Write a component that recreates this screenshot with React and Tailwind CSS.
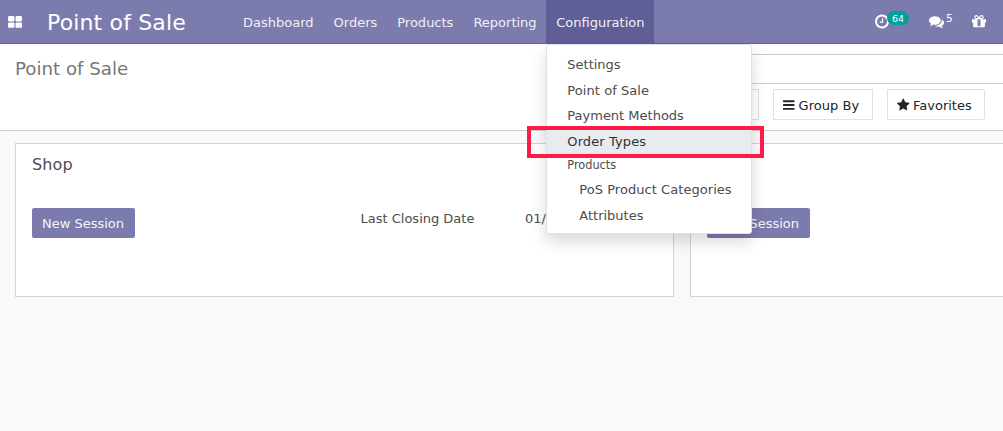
const ICONS = {
  apps: {
    w: 1664,
    d: 'M768 1024v384q0 52-38 90t-90 38h-512q-52 0-90-38t-38-90v-384q0-52 38-90t90-38h512q52 0 90 38t38 90zm0-768v384q0 52-38 90t-90 38h-512q-52 0-90-38t-38-90v-384q0-52 38-90t90-38h512q52 0 90 38t38 90zm896 768v384q0 52-38 90t-90 38h-512q-52 0-90-38t-38-90v-384q0-52 38-90t90-38h512q52 0 90 38t38 90zm0-768v384q0 52-38 90t-90 38h-512q-52 0-90-38t-38-90v-384q0-52 38-90t90-38h512q52 0 90 38t38 90z',
  },
  clock: {
    w: 1536,
    d: 'M896 544v448q0 14-9 23t-23 9h-320q-14 0-23-9t-9-23v-64q0-14 9-23t23-9h224v-352q0-14 9-23t23-9h64q14 0 23 9t9 23zm416 352q0-148-73-273t-198-198-273-73-273 73-198 198-73 273 73 273 198 198 273 73 273-73 198-198 73-273zm224 0q0 209-103 385.5t-279.5 279.5-385.5 103-385.5-103-279.5-279.5-103-385.5 103-385.5 279.5-279.5 385.5-103 385.5 103 279.5 279.5 103 385.5z',
  },
  comments: {
    w: 1792,
    d: 'M1408 768q0 139-94 257t-256.5 186.5-353.5 68.5q-86 0-176-16-124 88-278 128-36 9-86 16h-3q-11 0-20.5-8t-11.5-21q-1-3-1-6.5t.5-6.5 2-6l2.5-5 3.5-5.5 4-5 4.5-5 4-4.5q5-6 23-25t26-29.5 22.5-29 25-38.5 20.5-44q-124-72-195-177t-71-224q0-139 94-257t256.5-186.5 353.5-68.5 353.5 68.5 256.5 186.5 94 257zm384 256q0 120-71 224.5t-195 176.5q10 24 20.5 44t25 38.5 22.5 29 26 29.5 23 25q1 1 4 4.5t4.5 5 4 5 3.5 5.5l2.5 5 2 6 .5 6.5-1 6.5q-3 14-13 22t-22 7q-50-7-86-16-154-40-278-128-90 16-176 16-271 0-472-132 58 4 88 4 161 0 309-45t264-129q125-92 192-212t67-254q0-77-23-152 129 71 204 178t75 230z',
  },
  gift: {
    w: 1536,
    d: 'M928 1356v-716h-320v716q0 25 18 38.5t46 13.5h192q28 0 46-13.5t18-38.5zm-456-844h195l-126-161q-26-31-69-31-40 0-68 28t-28 68 28 68 68 28zm688-96q0-40-28-68t-68-28q-43 0-69 31l-125 161h194q40 0 68-28t28-68zm376 256v320q0 14-9 23t-23 9h-96v416q0 40-28 68t-68 28h-1088q-40 0-68-28t-28-68v-416h-96q-14 0-23-9t-9-23v-320q0-14 9-23t23-9h440q-93 0-158.5-65.5t-65.5-158.5 65.5-158.5 158.5-65.5q107 0 168 77l128 165 128-165q61-77 168-77 93 0 158.5 65.5t65.5 158.5-65.5 158.5-158.5 65.5h440q14 0 23 9t9 23z',
  },
  bars: {
    w: 1536,
    d: 'M1536 1344v128q0 26-19 45t-45 19h-1408q-26 0-45-19t-19-45v-128q0-26 19-45t45-19h1408q26 0 45 19t19 45zm0-512v128q0 26-19 45t-45 19h-1408q-26 0-45-19t-19-45v-128q0-26 19-45t45-19h1408q26 0 45 19t19 45zm0-512v128q0 26-19 45t-45 19h-1408q-26 0-45-19t-19-45v-128q0-26 19-45t45-19h1408q26 0 45 19t19 45z',
  },
  star: {
    w: 1664,
    d: 'M1664 647q0 22-26 48l-363 354 86 500q1 7 1 20 0 21-10.5 35.5t-30.5 14.5q-19 0-40-12l-449-236-449 236q-22 12-40 12-21 0-31.5-14.5t-10.5-35.5q0-6 2-20l86-500-364-354q-25-27-25-48 0-37 56-46l502-73 225-455q19-41 49-41t49 41l225 455 502 73q56 9 56 46z',
  },
};

function Icon({ name, className }) {
  const { w, d } = ICONS[name];
  return (
    <svg viewBox={`0 0 ${w} 1792`} fill="currentColor" className={className}>
      <path d={d} />
    </svg>
  );
}

function DropdownItem({ children, nested, active }) {
  return (
    <div
      className={`h-[25.5px] py-[3px] leading-[19.5px] ${nested ? 'pl-[32.5px]' : 'pl-[20.5px]'} ${
        active ? 'bg-[#e9ecef] text-[#333333]' : ''
      }`}
    >
      {children}
    </div>
  );
}

function ConfigurationMenu() {
  return (
    <div className="absolute top-11 left-0 z-10 h-[190px] w-[206px] rounded-[3px] border border-[#dee2e6] bg-white pt-[7px] whitespace-nowrap text-[#4c4c4c] shadow-[0_8px_16px_rgba(0,0,0,0.15)]">
      <DropdownItem>Settings</DropdownItem>
      <DropdownItem><span className="tracking-[0.07px]">Point of Sale</span></DropdownItem>
      <DropdownItem>Payment Methods</DropdownItem>
      <DropdownItem active><span className="tracking-[0.1px]">Order Types</span></DropdownItem>
      <div className="h-[23px] pt-[2px] pl-[20.5px] font-['DejaVu_Sans_Condensed','DejaVu_Sans',sans-serif] text-[12.6px] leading-[17px] font-stretch-condensed">
        Products
      </div>
      <DropdownItem nested><span className="tracking-[0.05px]">PoS Product Categories</span></DropdownItem>
      <DropdownItem nested>Attributes</DropdownItem>
      <div className="absolute top-[81px] -left-5 h-8 w-[237px] border-4 border-[#ff1b48]" />
    </div>
  );
}

function Navbar() {
  return (
    <header className="flex h-11 items-stretch border-b border-[#5f5e97] bg-[#7c7bad] text-[#f0f0f6]">
      <div className="flex w-[47px] items-center pt-px pl-2 text-white">
        <Icon name="apps" className="h-[15px] w-[14px]" />
      </div>
      <div className="w-[186px] text-[22px] leading-[46px] tracking-[0.15px] whitespace-nowrap text-white">Point of Sale</div>
      <nav className="flex leading-[46px]">
        <span className="px-[10px]">Dashboard</span>
        <span className="px-[10px]">Orders</span>
        <span className="px-[10px]">Products</span>
        <span className="px-[10px]">Reporting</span>
        <div className="relative -mb-px -ml-[0.8px] h-11 w-[108px] bg-[#5f5e97] pl-[10.5px]">
          Configuration
          <ConfigurationMenu />
        </div>
      </nav>
      <div className="ml-auto flex items-start pr-[17px] text-white">
        <Icon name="clock" className="mt-[13px] h-[17px] w-[14px]" />
        <span className="mt-[11px] -ml-[2px] h-[14px] w-[22px] rounded-[7px] bg-[#00a09d] text-center text-[9.5px] leading-[15px]">64</span>
        <Icon name="comments" className="mt-[13px] ml-5 h-[17px] w-[15px]" />
        <span className="ml-[2px] w-[7px] pt-[11px] text-[10.5px] leading-[14px]">5</span>
        <Icon name="gift" className="mt-[13px] ml-[19px] h-[17px] w-[14px]" />
      </div>
    </header>
  );
}

function ControlPanel() {
  return (
    <section className="flex h-[87px] justify-between border-b border-[#cccccc] bg-white">
      <h1 className="pt-[11px] pl-[15px] text-[18.2px] leading-[27px] text-[#777777]">Point of Sale</h1>
      <div className="flex w-[340px] flex-col pt-[10px]">
        <div className="h-[30px] shrink-0 border-y border-[#cccccc]" />
        <div className="mt-[5px] flex text-[#212529]">
          <div className="h-[31px] w-[96px] border border-[#dee2e6]" />
          <div className="ml-[14px] flex h-[31px] w-[100px] items-center border border-[#dee2e6] pl-[9px] whitespace-nowrap">
            <Icon name="bars" className="mr-[4px] h-[14px] w-[11.5px]" />
            <span className="pt-[2px] tracking-[0.06px]">Group By</span>
          </div>
          <div className="ml-[14px] flex h-[31px] w-[98px] items-center rounded-r-[2px] border border-[#dee2e6] pl-[9px] whitespace-nowrap">
            <Icon name="star" className="mr-[3.5px] h-[14px] w-[12.5px]" />
            <span className="pt-[2px]">Favorites</span>
          </div>
        </div>
      </div>
    </section>
  );
}

function ShopCard({ title, date }) {
  return (
    <article className="h-[154px] w-[659px] shrink-0 border border-[#ced4da] bg-white px-4 pt-2">
      <h2 className="h-6 text-[16px] leading-[25px] tracking-[0.1px]">{title}</h2>
      <div className="mt-8 flex items-start">
        <button className="h-[30px] w-[103px] rounded-[2px] bg-[#7c7bad] pt-px pr-px whitespace-nowrap text-[#f4f4f8]">New Session</button>
        <span className="ml-[225.5px] w-[164.5px] leading-[22px]">{date && 'Last Closing Date'}</span>
        <span className="leading-[22px]">{date}</span>
      </div>
    </article>
  );
}

export default function App() {
  return (
    <div className="h-[431px] w-full overflow-hidden bg-[#f9f9f9] font-['DejaVu_Sans',sans-serif] text-[13px] text-[#4c4c4c]">
      <Navbar />
      <ControlPanel />
      <main className="flex gap-4 overflow-hidden pt-3 pl-[15px]">
        <ShopCard title="Shop" date="01/" />
        <ShopCard title="" date="" />
      </main>
    </div>
  );
}
